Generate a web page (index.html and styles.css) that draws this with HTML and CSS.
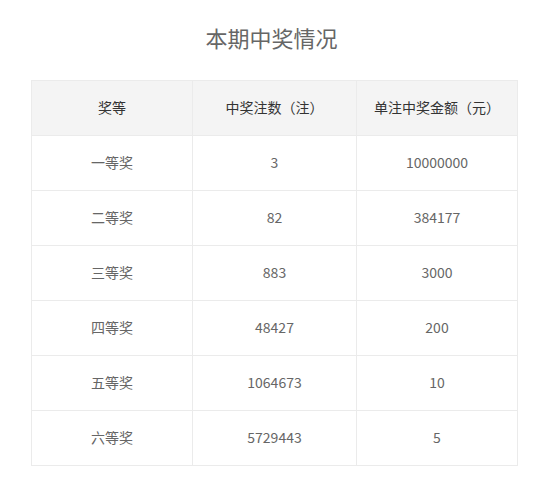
FILE: index.html
```html
<!DOCTYPE html>
<html>
<head>
<meta charset="utf-8">
<link rel="stylesheet" href="styles.css">
</head>
<body>
<div class="wrap">
  <h2 class="title">本期中奖情况</h2>
  <table class="prize">
    <colgroup><col class="c1"><col class="c2"><col class="c3"></colgroup>
    <thead>
      <tr>
        <th>奖等</th>
        <th>中奖注数（注）</th>
        <th>单注中奖金额（元）</th>
      </tr>
    </thead>
    <tbody>
      <tr><td>一等奖</td><td>3</td><td>10000000</td></tr>
      <tr><td>二等奖</td><td>82</td><td>384177</td></tr>
      <tr><td>三等奖</td><td>883</td><td>3000</td></tr>
      <tr><td>四等奖</td><td>48427</td><td>200</td></tr>
      <tr><td>五等奖</td><td>1064673</td><td>10</td></tr>
      <tr><td>六等奖</td><td>5729443</td><td>5</td></tr>
    </tbody>
  </table>
</div>
</body>
</html>
```

FILE: styles.css
```css
html, body {
  margin: 0;
  padding: 0;
  background: #fff;
}
body {
  font-family: "Noto Sans CJK SC", "Open Sans", sans-serif;
}
.wrap {
  width: 486px;
  margin-left: 31px;
  padding-top: 22px;
}
.title {
  margin: 0 0 28px;
  font-size: 22px;
  line-height: 30px;
  font-weight: normal;
  color: #666;
  text-align: center;
  padding-right: 5px;
}
.prize {
  width: 486px;
  border-collapse: collapse;
  table-layout: fixed;
  font-size: 14px;
}
.c1 { width: 161px; }
.c2 { width: 164px; }
.c3 { width: 161px; }
.prize th, .prize td {
  border: 1px solid #ebebeb;
  height: 52px;
  padding: 0 0 2px;
  text-align: center;
  vertical-align: middle;
}
.prize th {
  background: #f4f4f4;
  color: #333;
  font-weight: normal;
}
.prize td {
  color: #666;
}
```
